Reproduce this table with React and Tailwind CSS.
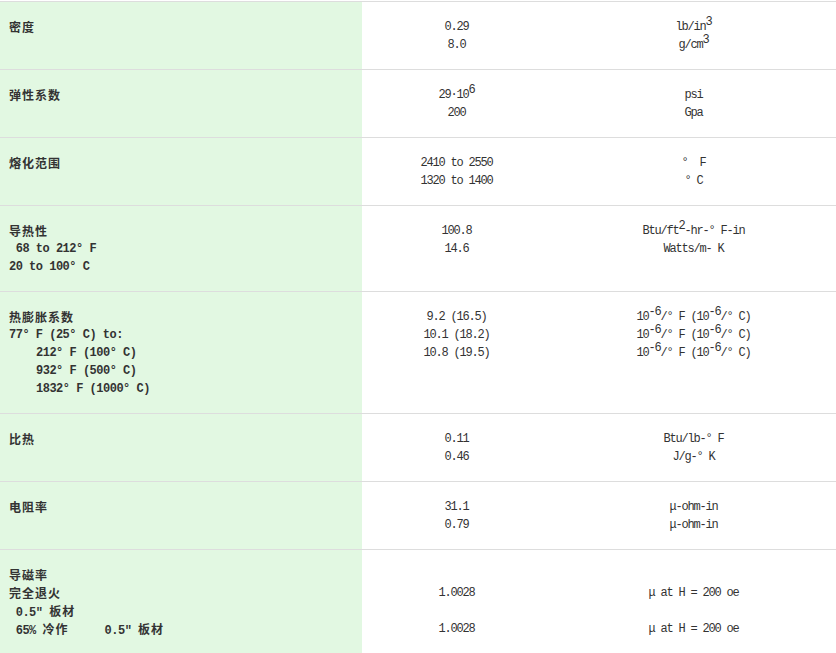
import React from "react";

const Ln = ({ children, className = "" }) => (
  <div className={"h-[18px] leading-[18px] whitespace-pre " + className}>{children}</div>
);

const C = ({ children }) => (
  <span className="font-['Noto_Sans_CJK_SC',sans-serif] tracking-[1px]">{children}</span>
);

const Sup = ({ children }) => (
  <sup className="text-[12px] top-[-0.4em]">{children}</sup>
);

function Row({ a, b, c }) {
  return (
    <div className="grid grid-cols-[362px_189px_285px] border-t border-[#dddddd]">
      <div className="bg-[#e2f8e2] pl-[9px] pt-4 pb-[15px] font-bold tracking-[-0.5px]">{a}</div>
      <div className="pt-4 pb-[15px] text-center tracking-[-1.2px]">{b}</div>
      <div className="pt-4 pb-[15px] text-center tracking-[-1.2px]">{c}</div>
    </div>
  );
}

export default function App() {
  return (
    <div className="w-[836px] h-[653px] overflow-hidden bg-white pt-px text-[12px] text-[#333333] font-['Liberation_Mono','Noto_Sans_CJK_SC',monospace]">
      <Row
        a={<Ln><C>密度</C></Ln>}
        b={<><Ln>0.29</Ln><Ln>8.0</Ln></>}
        c={<><Ln>lb/in<Sup>3</Sup></Ln><Ln>g/cm<Sup>3</Sup></Ln></>}
      />
      <Row
        a={<Ln><C>弹性系数</C></Ln>}
        b={<><Ln>29·10<Sup>6</Sup></Ln><Ln>200</Ln></>}
        c={<><Ln>psi</Ln><Ln>Gpa</Ln></>}
      />
      <Row
        a={<Ln><C>熔化范围</C></Ln>}
        b={<><Ln>2410 to 2550</Ln><Ln>1320 to 1400</Ln></>}
        c={<><Ln>°  F</Ln><Ln>° C</Ln></>}
      />
      <Row
        a={<><Ln><C>导热性</C></Ln><Ln> 68 to 212° F</Ln><Ln>20 to 100° C</Ln></>}
        b={<><Ln>100.8</Ln><Ln>14.6</Ln></>}
        c={<><Ln>Btu/ft<Sup>2</Sup>-hr-° F-in</Ln><Ln>Watts/m- K</Ln></>}
      />
      <Row
        a={
          <>
            <Ln><C>热膨胀系数</C></Ln>
            <Ln>77° F (25° C) to:</Ln>
            <Ln className="pl-[27px]">212° F (100° C)</Ln>
            <Ln className="pl-[27px]">932° F (500° C)</Ln>
            <Ln className="pl-[27px]">1832° F (1000° C)</Ln>
          </>
        }
        b={<><Ln>9.2 (16.5)</Ln><Ln>10.1 (18.2)</Ln><Ln>10.8 (19.5)</Ln></>}
        c={
          <>
            <Ln>10<Sup>-6</Sup>/° F (10<Sup>-6</Sup>/° C)</Ln>
            <Ln>10<Sup>-6</Sup>/° F (10<Sup>-6</Sup>/° C)</Ln>
            <Ln>10<Sup>-6</Sup>/° F (10<Sup>-6</Sup>/° C)</Ln>
          </>
        }
      />
      <Row
        a={<Ln><C>比热</C></Ln>}
        b={<><Ln>0.11</Ln><Ln>0.46</Ln></>}
        c={<><Ln>Btu/lb-° F</Ln><Ln>J/g-° K</Ln></>}
      />
      <Row
        a={<Ln><C>电阻率</C></Ln>}
        b={<><Ln>31.1</Ln><Ln>0.79</Ln></>}
        c={<><Ln>μ-ohm-in</Ln><Ln>μ-ohm-in</Ln></>}
      />
      <Row
        a={
          <>
            <Ln><C>导磁率</C></Ln>
            <Ln><C>完全退火</C></Ln>
            <Ln> 0.5″ <C>板材</C></Ln>
            <Ln> 65% <C>冷作</C><span className="ml-[36px]">0.5″ </span><C>板材</C></Ln>
          </>
        }
        b={<><Ln>{"\u00a0"}</Ln><Ln>1.0028</Ln><Ln>{"\u00a0"}</Ln><Ln>1.0028</Ln></>}
        c={<><Ln>{"\u00a0"}</Ln><Ln>μ at H = 200 oe</Ln><Ln>{"\u00a0"}</Ln><Ln>μ at H = 200 oe</Ln></>}
      />
    </div>
  );
}
